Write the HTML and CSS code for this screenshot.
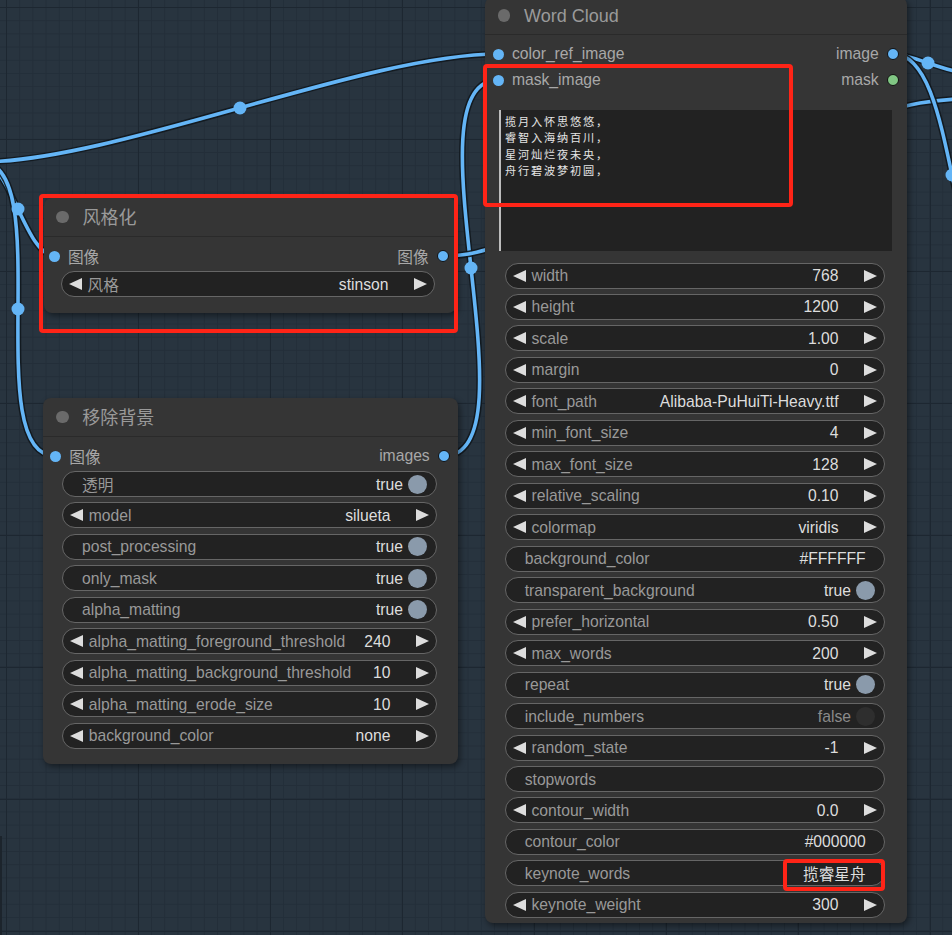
FILE: index.html
```html
<!DOCTYPE html>
<html lang="zh">
<head>
<meta charset="utf-8">
<title>Word Cloud</title>
<link rel="stylesheet" href="styles.css">
</head>
<body>
<div class="canvas">
  <svg class="wires" width="952" height="935" viewBox="0 0 952 935">
    <rect class="edge" x="0" y="836" width="2" height="100"/>
    <path class="wire-bg" d="M-19,162 C113,162 366,54 498,54"/>
    <path class="wire" d="M-19,162 C113,162 366,54 498,54"/>
    <path class="wire-bg" d="M-19,162 C11,162 25,256 55,256"/>
    <path class="wire" d="M-19,162 C11,162 25,256 55,256"/>
    <path class="wire-bg" d="M-19,162 C57,162 -21,456 55,456"/>
    <path class="wire" d="M-19,162 C57,162 -21,456 55,456"/>
    <path class="wire-bg" d="M444,456 C539,456 403,80 498,80"/>
    <path class="wire" d="M444,456 C539,456 403,80 498,80"/>
    <path class="wire-bg" d="M443,256 C470,256 480,251 500,246 L880,113 C910,104 930,100 960,99"/>
    <path class="wire" d="M443,256 C470,256 480,251 500,246 L880,113 C910,104 930,100 960,99"/>
    <path class="wire-bg" d="M893,54 C911,54 945,72 963,72"/>
    <path class="wire" d="M893,54 C911,54 945,72 963,72"/>
    <path class="wire-bg" d="M893,54 C960,54 944,296 1011,296"/>
    <path class="wire" d="M893,54 C960,54 944,296 1011,296"/>
    <circle class="mid" cx="240" cy="108" r="6.5"/>
    <circle class="mid" cx="18" cy="209" r="6.5"/>
    <circle class="mid" cx="18" cy="309" r="6.5"/>
    <circle class="mid" cx="471" cy="268" r="6.5"/>
    <circle class="mid" cx="928" cy="63" r="6.5"/>
    <circle class="mid" cx="952" cy="175" r="6.5"/>
  </svg>

  <!-- 风格化 -->
  <div class="node n-style">
    <div class="title"><span class="tdot"></span><span class="tname">风格化</span></div>
    <div class="slot">
      <span class="in"><i class="dot"></i>图像</span>
      <span class="out">图像<i class="dot o"></i></span>
    </div>
    <div class="widgets">
      <div class="w num"><span class="tri l"></span><span class="lbl">风格</span><span class="val">stinson</span><span class="tri r"></span></div>
    </div>
  </div>

  <!-- 移除背景 -->
  <div class="node n-rembg">
    <div class="title"><span class="tdot"></span><span class="tname">移除背景</span></div>
    <div class="slot">
      <span class="in"><i class="dot"></i>图像</span>
      <span class="out">images<i class="dot o"></i></span>
    </div>
    <div class="widgets">
      <div class="w tog"><span class="lbl">透明</span><span class="val">true</span><span class="knob"></span></div>
      <div class="w num"><span class="tri l"></span><span class="lbl">model</span><span class="val">silueta</span><span class="tri r"></span></div>
      <div class="w tog"><span class="lbl">post_processing</span><span class="val">true</span><span class="knob"></span></div>
      <div class="w tog"><span class="lbl">only_mask</span><span class="val">true</span><span class="knob"></span></div>
      <div class="w tog"><span class="lbl">alpha_matting</span><span class="val">true</span><span class="knob"></span></div>
      <div class="w num"><span class="tri l"></span><span class="lbl">alpha_matting_foreground_threshold</span><span class="val">240</span><span class="tri r"></span></div>
      <div class="w num"><span class="tri l"></span><span class="lbl">alpha_matting_background_threshold</span><span class="val">10</span><span class="tri r"></span></div>
      <div class="w num"><span class="tri l"></span><span class="lbl">alpha_matting_erode_size</span><span class="val">10</span><span class="tri r"></span></div>
      <div class="w num"><span class="tri l"></span><span class="lbl">background_color</span><span class="val">none</span><span class="tri r"></span></div>
    </div>
  </div>

  <!-- Word Cloud -->
  <div class="node n-wc">
    <div class="title"><span class="tdot"></span><span class="tname">Word Cloud</span></div>
    <div class="slot">
      <span class="in"><i class="dot"></i>color_ref_image</span>
      <span class="out">image<i class="dot o"></i></span>
    </div>
    <div class="slot">
      <span class="in"><i class="dot"></i>mask_image</span>
      <span class="out">mask<i class="dot o green"></i></span>
    </div>
    <div class="textarea">
      <div class="tline">揽月入怀思悠悠，</div>
      <div class="tline">睿智入海纳百川，</div>
      <div class="tline">星河灿烂夜未央，</div>
      <div class="tline">舟行碧波梦初圆，</div>
    </div>
    <div class="widgets">
      <div class="w num"><span class="tri l"></span><span class="lbl">width</span><span class="val">768</span><span class="tri r"></span></div>
      <div class="w num"><span class="tri l"></span><span class="lbl">height</span><span class="val">1200</span><span class="tri r"></span></div>
      <div class="w num"><span class="tri l"></span><span class="lbl">scale</span><span class="val">1.00</span><span class="tri r"></span></div>
      <div class="w num"><span class="tri l"></span><span class="lbl">margin</span><span class="val">0</span><span class="tri r"></span></div>
      <div class="w num"><span class="tri l"></span><span class="lbl">font_path</span><span class="val">Alibaba-PuHuiTi-Heavy.ttf</span><span class="tri r"></span></div>
      <div class="w num"><span class="tri l"></span><span class="lbl">min_font_size</span><span class="val">4</span><span class="tri r"></span></div>
      <div class="w num"><span class="tri l"></span><span class="lbl">max_font_size</span><span class="val">128</span><span class="tri r"></span></div>
      <div class="w num"><span class="tri l"></span><span class="lbl">relative_scaling</span><span class="val">0.10</span><span class="tri r"></span></div>
      <div class="w num"><span class="tri l"></span><span class="lbl">colormap</span><span class="val">viridis</span><span class="tri r"></span></div>
      <div class="w txt"><span class="lbl">background_color</span><span class="val">#FFFFFF</span></div>
      <div class="w tog"><span class="lbl">transparent_background</span><span class="val">true</span><span class="knob"></span></div>
      <div class="w num"><span class="tri l"></span><span class="lbl">prefer_horizontal</span><span class="val">0.50</span><span class="tri r"></span></div>
      <div class="w num"><span class="tri l"></span><span class="lbl">max_words</span><span class="val">200</span><span class="tri r"></span></div>
      <div class="w tog"><span class="lbl">repeat</span><span class="val">true</span><span class="knob"></span></div>
      <div class="w tog"><span class="lbl">include_numbers</span><span class="val off">false</span><span class="knob off"></span></div>
      <div class="w num"><span class="tri l"></span><span class="lbl">random_state</span><span class="val">-1</span><span class="tri r"></span></div>
      <div class="w txt"><span class="lbl">stopwords</span><span class="val"></span></div>
      <div class="w num"><span class="tri l"></span><span class="lbl">contour_width</span><span class="val">0.0</span><span class="tri r"></span></div>
      <div class="w txt"><span class="lbl">contour_color</span><span class="val">#000000</span></div>
      <div class="w txt"><span class="lbl">keynote_words</span><span class="val">揽睿星舟</span></div>
      <div class="w num"><span class="tri l"></span><span class="lbl">keynote_weight</span><span class="val">300</span><span class="tri r"></span></div>
    </div>
  </div>

  <div class="mark m1"></div>
  <div class="mark m2"></div>
  <div class="mark m3"></div>
</div>
</body>
</html>
```
FILE: styles.css
```css
* { box-sizing: border-box; margin: 0; padding: 0; }
html, body { width: 952px; height: 935px; overflow: hidden; }
body {
  font-family: "Liberation Sans", "Noto Sans CJK SC", sans-serif;
  background: #28343f;
}
.canvas {
  position: relative;
  width: 952px;
  height: 935px;
  overflow: hidden;
  background-color: #28343f;
  background-image:
    linear-gradient(to right, #1d2731 1px, transparent 1px),
    linear-gradient(to bottom, #1d2731 1px, transparent 1px),
    linear-gradient(to right, #232e39 1px, transparent 1px),
    linear-gradient(to bottom, #232e39 1px, transparent 1px);
  background-size: 132px 132px, 132px 132px, 13.2px 13.2px, 13.2px 13.2px;
  background-position: 6px 7px, 6px 7px, 6px 7px, 6px 7px;
}

/* wires */
.wires { position: absolute; left: 0; top: 0; }
.wire-bg { fill: none; stroke: #11171d; stroke-width: 6.6; stroke-opacity: 0.9; }
.wire { fill: none; stroke: #64b5f6; stroke-width: 3.6; }
.mid { fill: #64b5f6; }
.edge { fill: #1c242c; }

/* nodes */
.node {
  position: absolute;
  background: #353535;
  border-radius: 8px;
  box-shadow: 2px 3px 6px rgba(0, 0, 0, 0.45);
  display: flex;
  flex-direction: column;
}
.n-style { left: 43.5px; top: 198px; width: 412px; padding-bottom: 16px; }
.n-rembg { left: 43.3px; top: 398px; width: 414.7px; padding-bottom: 15.5px; }
.n-wc { left: 485px; top: -3px; width: 422px; padding-bottom: 5px; }

.title {
  height: 39px;
  border-bottom: 1px solid #2a2a2a;
  display: flex;
  align-items: center;
  padding-left: 12.7px;
  flex: none;
}
.n-wc .title { height: 38px; }
.tdot {
  width: 12.6px;
  height: 12.6px;
  border-radius: 50%;
  background: #6a6a6a;
  margin-right: 13.7px;
}
.tname { font-size: 18px; color: #9a9a9a; line-height: 1; padding-top: 1px; }

/* slots */
.slot {
  height: 26px;
  display: flex;
  align-items: center;
  justify-content: space-between;
  font-size: 15.7px;
  color: #a8a8a8;
  white-space: nowrap;
}
.node > .slot:nth-child(2) { margin-top: 6px; }
.in, .out { display: flex; align-items: center; gap: 8.1px; }
.n-style .in { padding-left: 5.3px; }
.n-style .out { padding-right: 6.7px; }
.n-rembg .in { padding-left: 6.9px; }
.n-rembg .out { padding-right: 8.2px; }
.n-wc .in { padding-left: 7.8px; }
.n-wc .out { padding-right: 8.2px; }
.dot {
  display: block;
  width: 11px;
  height: 11px;
  border-radius: 50%;
  background: #64b5f6;
}
.dot.o { border: 1.5px solid #111; width: 12px; height: 12px; }
.dot.green { background: #81c784; }

/* textarea */
.textarea {
  margin: 17px 0 0 14px;
  width: 393px;
  height: 141px;
  background: #222;
  border-left: 2px solid #bdbdbd;
  padding: 3px 0 0 4px;
  font-family: "Noto Sans CJK SC", sans-serif;
  font-size: 11.2px;
  letter-spacing: 1.8px;
  color: #e4e4e4;
}
.tline { height: 16.3px; line-height: 16.2px; white-space: nowrap; }

/* widgets */
.widgets {
  display: flex;
  flex-direction: column;
  gap: 5.48px;
  margin-top: 2px;
}
.n-style .widgets { margin-left: 17.5px; width: 374px; }
.n-rembg .widgets { margin-left: 19px; width: 374.7px; }
.n-wc .widgets { margin-left: 20px; width: 380px; margin-top: 11.5px; }

.w {
  height: 26px;
  background: #222;
  border: 1px solid #666;
  border-radius: 13px;
  display: flex;
  align-items: center;
  font-size: 15.7px;
  white-space: nowrap;
  padding-top: 1px;
}
.lbl { color: #999; flex: 1; min-width: 0; }
.val { color: #ddd; }
.val.off { color: #8a8a8a; }

.w.num { padding-left: 7px; padding-right: 7px; }
.w.num .lbl { margin-left: 5.5px; }
.w.num .val { margin-right: 25.5px; }
.tri {
  width: 0;
  height: 0;
  border-top: 6.5px solid transparent;
  border-bottom: 6.5px solid transparent;
  flex: none;
  margin-top: -1px;
}
.tri.l { border-right: 13px solid #ddd; }
.tri.r { border-left: 13px solid #ddd; }

.w.tog { padding-left: 18.7px; padding-right: 9px; }
.knob {
  width: 19px;
  height: 19px;
  border-radius: 50%;
  background: #8a9aab;
  margin-left: 5px;
  margin-top: -1px;
  flex: none;
}
.knob.off { background: #2e2e2e; }

.w.txt { padding-left: 18.7px; padding-right: 18.3px; }

/* annotation boxes */
.mark {
  position: absolute;
  border: 4px solid #ff2417;
  border-radius: 4px;
}
.m1 { left: 39px; top: 194px; width: 419px; height: 139px; }
.m2 { left: 483px; top: 64px; width: 310px; height: 143px; }
.m3 { left: 783px; top: 859px; width: 102px; height: 32px; }
```
